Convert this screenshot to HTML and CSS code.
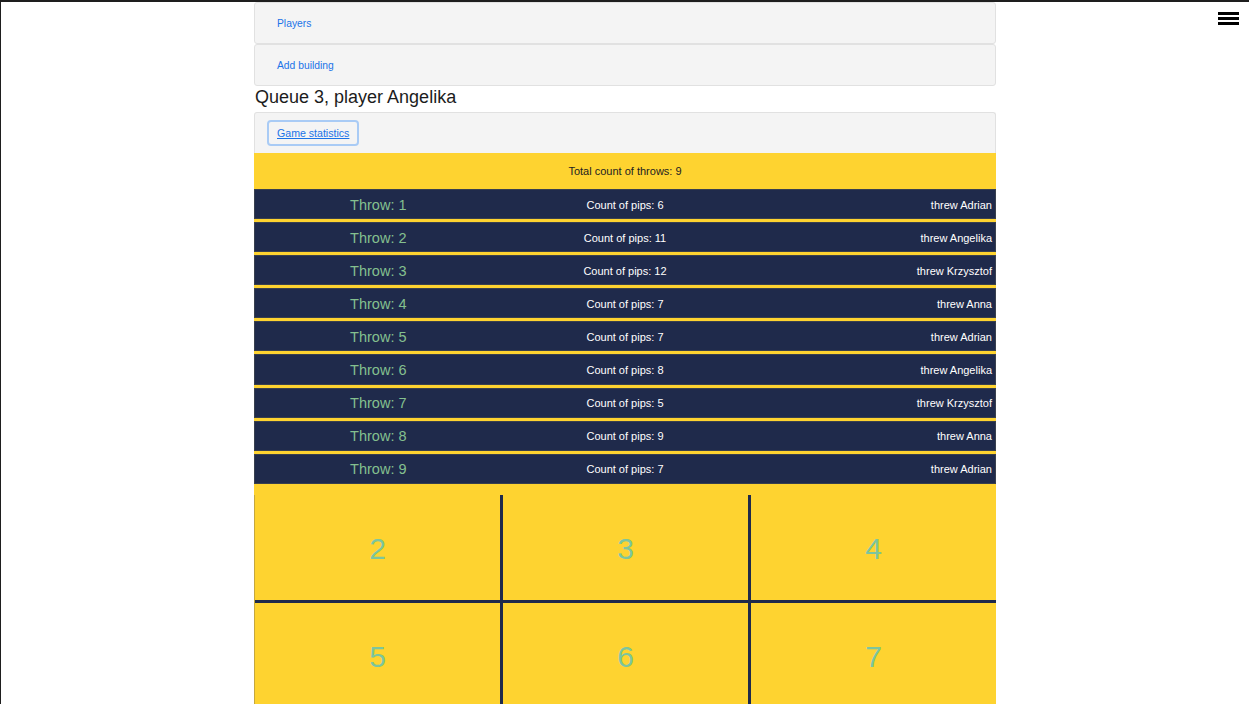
FILE: index.html
```html
<!DOCTYPE html>
<html>
<head>
<meta charset="utf-8">
<link rel="stylesheet" href="styles.css">
</head>
<body>
<div class="frame">
  <button class="burger" aria-label="menu"><span></span><span></span><span></span></button>
  <div class="container">
    <div class="card"><a class="link" href="#">Players</a></div>
    <div class="card"><a class="link" href="#">Add building</a></div>
    <h2 class="title">Queue 3, player Angelika</h2>
    <div class="card card-stats"><button class="stats-btn">Game statistics</button></div>
    <div class="stats">
      <div class="total">Total count of throws: 9</div>
      <div class="throws">
        <div class="throw"><span class="t-num">Throw: 1</span><span class="t-pips">Count of pips: 6</span><span class="t-who">threw Adrian</span></div>
        <div class="throw"><span class="t-num">Throw: 2</span><span class="t-pips">Count of pips: 11</span><span class="t-who">threw Angelika</span></div>
        <div class="throw"><span class="t-num">Throw: 3</span><span class="t-pips">Count of pips: 12</span><span class="t-who">threw Krzysztof</span></div>
        <div class="throw"><span class="t-num">Throw: 4</span><span class="t-pips">Count of pips: 7</span><span class="t-who">threw Anna</span></div>
        <div class="throw"><span class="t-num">Throw: 5</span><span class="t-pips">Count of pips: 7</span><span class="t-who">threw Adrian</span></div>
        <div class="throw"><span class="t-num">Throw: 6</span><span class="t-pips">Count of pips: 8</span><span class="t-who">threw Angelika</span></div>
        <div class="throw"><span class="t-num">Throw: 7</span><span class="t-pips">Count of pips: 5</span><span class="t-who">threw Krzysztof</span></div>
        <div class="throw"><span class="t-num">Throw: 8</span><span class="t-pips">Count of pips: 9</span><span class="t-who">threw Anna</span></div>
        <div class="throw"><span class="t-num">Throw: 9</span><span class="t-pips">Count of pips: 7</span><span class="t-who">threw Adrian</span></div>
      </div>
      <div class="grid">
        <div class="cell">2</div>
        <div class="cell">3</div>
        <div class="cell">4</div>
        <div class="cell">5</div>
        <div class="cell">6</div>
        <div class="cell">7</div>
      </div>
    </div>
  </div>
</div>
</body>
</html>
```

FILE: styles.css
```css
html, body {
  margin: 0;
  padding: 0;
  background: #ffffff;
}
body {
  font-family: "Liberation Sans", Arial, sans-serif;
  color: #212529;
}
.frame {
  border-top: 2px solid #1e1e1e;
  border-left: 1px solid #1e1e1e;
  min-height: 702px;
  position: relative;
}
.burger {
  position: absolute;
  top: 10px;
  right: 10px;
  width: 21px;
  height: 13px;
  padding: 0;
  border: 0;
  background: transparent;
  display: flex;
  flex-direction: column;
  justify-content: space-between;
}
.burger span {
  display: block;
  height: 3px;
  background: #000;
}
.container {
  width: 742px;
  margin: 0 auto;
}
.card {
  box-sizing: border-box;
  height: 42px;
  background: #f4f4f4;
  border: 1px solid #e1e1e1;
  border-radius: 3px;
  display: flex;
  align-items: center;
  padding: 0 22px;
}
.link {
  font-size: 10.3px;
  color: #1a73e8;
  text-decoration: none;
}
.title {
  margin: 0;
  height: 26px;
  line-height: 22px;
  font-size: 18px;
  font-weight: 400;
  color: #1c1c1c;
  padding-left: 1px;
}
.card-stats {
  height: 41px;
  padding: 0 12px;
  border-bottom: 0;
  border-radius: 3px 3px 0 0;
}
.stats-btn {
  font-family: inherit;
  font-size: 10.6px;
  color: #1a73e8;
  text-decoration: underline;
  background: #f4f4f4;
  border: 2px solid #a9cbf5;
  border-radius: 4px;
  height: 26px;
  padding: 0 8px;
}
.stats {
  background: #fed330;
}
.total {
  height: 36px;
  display: flex;
  align-items: center;
  justify-content: center;
  font-size: 11px;
  color: #222;
}
.throws {
  display: flex;
  flex-direction: column;
  gap: 3px;
  padding-bottom: 11px;
}
.throw {
  box-sizing: border-box;
  height: 30.1px;
  padding-top: 1px;
  background: #1f2a4b;
  border: 1px solid #39404e;
  display: grid;
  grid-template-columns: 1fr 1fr 1fr;
  align-items: center;
  color: #fff;
  font-size: 11px;
}
.t-num {
  text-align: center;
  font-size: 14.5px;
  color: #84c08f;
}
.t-pips {
  text-align: center;
}
.t-who {
  text-align: right;
  padding-right: 3px;
}
.grid {
  display: grid;
  grid-template-columns: 1fr 1fr 1fr;
  grid-auto-rows: 105px;
  gap: 3px;
  background: #1f2a4b;
  border-left: 1px solid #c4a73f;
}
.cell {
  background: #fed330;
  display: flex;
  align-items: center;
  justify-content: center;
  padding-top: 3px;
  font-size: 30px;
  color: #7cc59e;
}
```
